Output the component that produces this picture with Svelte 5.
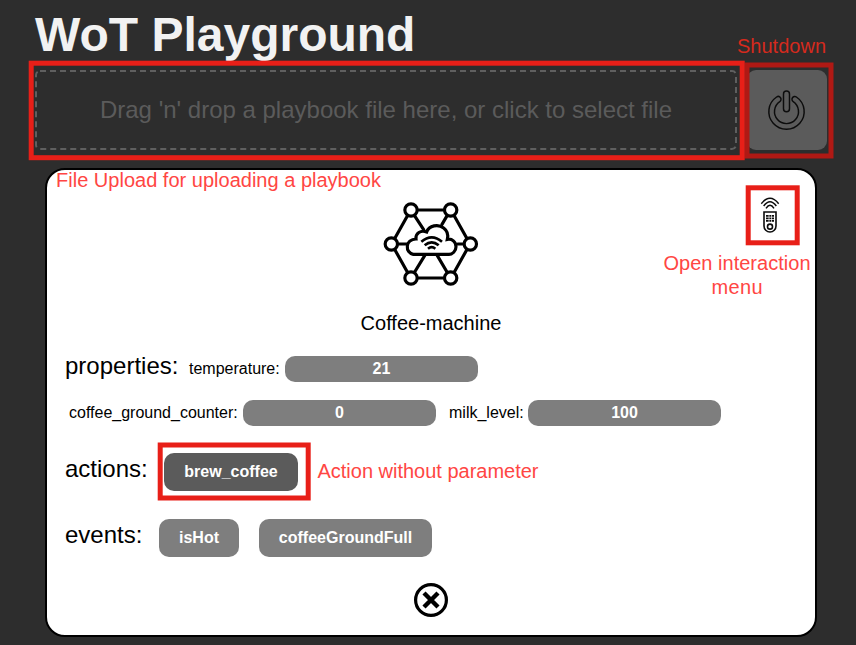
<script>
  const firstRow = [{ name: 'temperature', value: 21 }];
  const secondRow = [
    { name: 'coffee_ground_counter', value: 0 },
    { name: 'milk_level', value: 100 }
  ];
  const events = ['isHot', 'coffeeGroundFull'];
  const nodes = [[108, 60], [227, 60], [286, 162], [227, 264], [108, 264], [49, 162]];
</script>

{#snippet property(p)}
  <label class="property"><span style:width={p.name === 'temperature' ? '96px' : p.name === 'milk_level' ? '79px' : '174px'}>{p.name}:</span><b>{p.value}</b></label>
{/snippet}

<div class="page">
  <h1>WoT Playground</h1>
  <div class="toolbar">
    <div class="dropzone">
      <svg class="dashes" width="702" height="80"><rect x="1" y="1" width="700" height="78" rx="4" /></svg>
      <p>Drag 'n' drop a playbook file here, or click to select file</p>
    </div>
    <button class="power" aria-label="Shutdown">
      <svg width="40" height="42" viewBox="97.5 102 120 126" fill="none" stroke="#0c0c0c" stroke-width="4.4">
        <path d="M126.3 126A53 53 0 1 0 185.7 126A8.5 8.5 0 0 0 176.2 140.1A36 36 0 1 1 135.8 140.1A8.5 8.5 0 0 0 126.3 126Z" />
        <rect x="147" y="108" width="18" height="62" rx="9" />
      </svg>
    </button>
  </div>

  <main class="card">
    <div class="hero">
      <svg class="logo" width="115" height="105" viewBox="0 0 345 315" fill="none" stroke="#000" stroke-width="9.5" stroke-linecap="round">
        <path d="M127 60H208M238 78L275 144M275 180L238 246M208 264H127M97 246L60 180M60 144L97 78M120 79L146 119M215 79L201 103M68 162H94M248 162H267M119 246L149 197M216 246L187 197" />
        <path fill="#fff" d="M115 193A22 22 0 0 1 97 169C97 157 108 147 123 147C121 130 137 119 155 126C162 106 190 101 206 114C218 123 220 136 217 148C231 145 243 156 243 170C243 184 232 193 222 193Z" />
        {#each nodes as [cx, cy]}
          <circle {cx} {cy} r="18.5" fill="#fff" />
        {/each}
        <path stroke-linecap="butt" stroke-width="8" d="M139 155Q170 129 201 155M149 166Q170 148 191 166M159 176Q170 167 181 176" />
      </svg>
      <button class="remote" aria-label="Open interaction menu">
        <svg width="24" height="38" viewBox="324 108 72 114" fill="none" stroke="#0c0c0c" stroke-width="4.8">
          <path d="M334 131Q360 99 386 131M341 138Q360 112 379 138M348 145Q360 127 372 145" stroke-width="4.4" />
          <path d="M342 156H378V198A18 18 0 0 1 342 198Z" />
          <circle cx="360" cy="200" r="7.5" />
          <path d="M348 167.5H356M358 167.5H363M365 167.5H372M348 175H356M358 175H363M365 175H372M348 182.5H356M358 182.5H363M365 182.5H372" />
        </svg>
      </button>
    </div>
    <h2>Coffee-machine</h2>

    <div class="row first">
      <h3 class="wide">properties:</h3>
      {#each firstRow as p}{@render property(p)}{/each}
    </div>
    <div class="row second">
      {#each secondRow as p}{@render property(p)}{/each}
    </div>
    <div class="row actions">
      <h3>actions:</h3>
      <button class="pill action">brew_coffee</button>
    </div>
    <div class="row events">
      <h3>events:</h3>
      {#each events as e, i}
        <button class="pill" style:width={i ? '173px' : '80px'}>{e}</button>
      {/each}
    </div>
    <button class="close" aria-label="Close">
      <svg width="36" height="36" viewBox="0 0 36 36" fill="none" stroke="#000">
        <circle cx="18" cy="18" r="15.4" stroke-width="3.2" />
        <path d="M11 11L25 25M25 11L11 25" stroke-width="4.4" />
      </svg>
    </button>
  </main>

  <!-- Callout layer over the application -->
  <svg class="callouts" width="856" height="645" aria-hidden="true">
    <g fill="none" stroke="#e81f18" stroke-width="5">
      <rect x="747" y="65" width="84" height="91" stroke="#b01914" />
      <rect x="31.2" y="63.2" width="711" height="94.5" />
      <rect x="748.2" y="187.8" width="49" height="55" />
      <rect x="160.2" y="445" width="148" height="53" />
    </g>
    <g fill="#ff4643">
      <text x="737" y="52.5" fill="#d52a1d" textLength="89">Shutdown</text>
      <text x="56" y="186.5" textLength="325">File Upload for uploading a playbook</text>
      <text x="663.5" y="270" textLength="147">Open interaction</text>
      <text x="711.5" y="294" textLength="51">menu</text>
      <text x="317.5" y="477.5" textLength="221">Action without parameter</text>
    </g>
  </svg>
</div>

<style>
  :global(body) { margin: 0; background: #2d2d2d; }
  .page {
    position: relative;
    box-sizing: border-box;
    width: 856px;
    height: 645px;
    overflow: hidden;
    background: #2d2d2d;
    font: 16px/26px "Liberation Sans", Arial, sans-serif;
    color: #000;
  }
  h1, h2, h3, p { margin: 0; font-weight: 400; }
  button { border: 0; padding: 0; font: inherit; background: none; }
  svg { display: block; }
  h1 {
    height: 70px;
    padding-left: 35px;
    box-sizing: border-box;
    font-size: 48px;
    font-weight: 700;
    line-height: 70px;
    color: #f2f2f2;
  }
  .toolbar { display: flex; gap: 10px; padding-left: 35px; height: 80px; }
  .dropzone { width: 702px; height: 80px; display: grid; }
  .dropzone > * { grid-area: 1 / 1; }
  .dashes rect { fill: none; stroke: #5f5f5f; stroke-width: 2; stroke-dasharray: 6 4; }
  .dropzone p {
    font-size: 24px;
    line-height: 80px;
    text-align: center;
    color: #5b5b5b;
    white-space: nowrap;
  }
  .power {
    width: 80px;
    height: 80px;
    border-radius: 9px;
    background: #5b5b5b;
    display: flex;
    align-items: center;
    justify-content: center;
  }
  .card {
    box-sizing: border-box;
    width: 772px;
    height: 469px;
    margin: 18px 0 0 45px;
    border: 2px solid #000;
    border-radius: 20px;
    background: #fff;
    padding: 20px 18px 0;
    display: flex;
    flex-direction: column;
  }
  .hero { height: 105px; display: flex; align-items: flex-start; }
  .logo { margin-left: 310px; }
  .remote { margin: 6px 0 0 268px; }
  h2 { margin-top: 15px; font-size: 20px; line-height: 26px; text-align: center; }
  .row { display: flex; align-items: center; }
  h3 { font-size: 24px; line-height: 26px; width: 94px; margin-bottom: 6px; }
  h3.wide { width: 124px; }
  .first { margin-top: 20px; height: 26px; }
  .second { margin-top: 18px; height: 26px; padding-left: 4px; gap: 13px; }
  .property { display: flex; }
  .property b {
    width: 193px;
    height: 26px;
    border-radius: 10px;
    background: #7e7e7e;
    color: #fff;
    text-align: center;
  }
  .actions { margin-top: 27px; height: 38px; }
  .events { margin-top: 28px; height: 38px; gap: 20px; }
  .events h3 { width: 74px; }
  .pill {
    height: 38px;
    border-radius: 10px;
    background: #7e7e7e;
    color: #fff;
    font-weight: 700;
    line-height: 38px;
  }
  .action { width: 134px; margin-left: 5px; background: #5b5b5b; }
  .close { align-self: center; margin-top: 25px; }
  .callouts {
    position: absolute;
    inset: 0;
    pointer-events: none;
    font-size: 20px;
  }
</style>
